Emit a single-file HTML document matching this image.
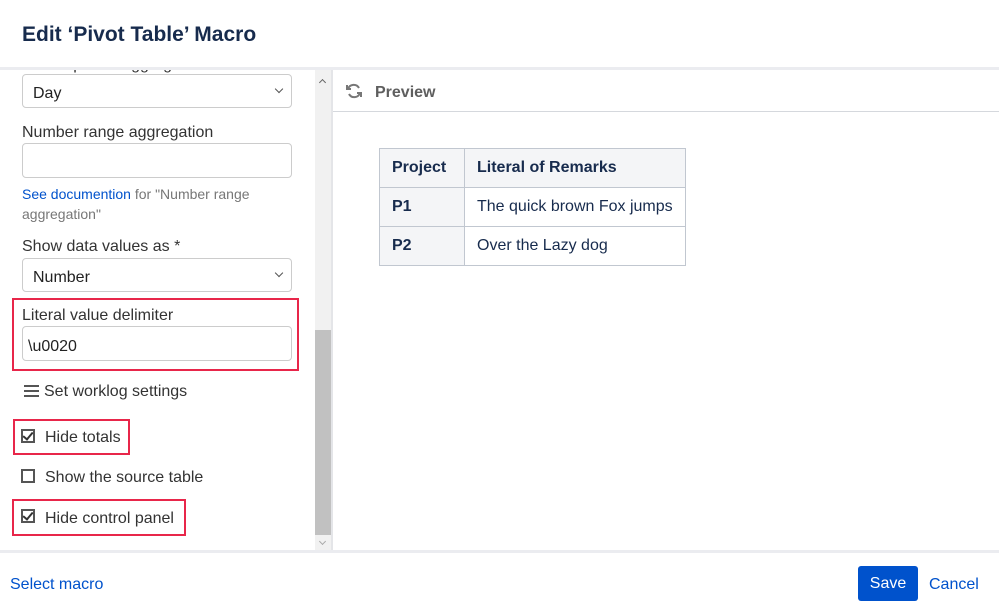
<!DOCTYPE html>
<html><head><meta charset="utf-8"><style>
*{box-sizing:border-box;margin:0;padding:0}
body{width:999px;height:610px;background:#fff;font-family:"Liberation Sans",sans-serif;color:#172b4d;position:relative;overflow:hidden}
.a{position:absolute}
.lbl{font-size:16px;color:#333}
.inp{border:1px solid #ccc;border-radius:4px;background:#fff}
.red{border:2px solid #e8264a}
.cb{width:14px;height:14px;border:2px solid #555;}
.chk::after{content:"";position:absolute;left:2px;top:-1px;width:4px;height:8px;border:solid #333;border-width:0 2px 2px 0;transform:rotate(40deg)}
.chev{width:7px;height:7px;border:solid #555;border-width:0 1.5px 1.5px 0;transform:rotate(45deg)}
td{border:1px solid #c1c7d0;font-size:16px;padding:0 12px;height:39px;white-space:nowrap}
</style></head><body>
<div class="a" style="left:22px;top:23px;font-size:21px;font-weight:bold;color:#172b4d">Edit ‘Pivot Table’ Macro</div>
<div class="a" style="left:0;top:67px;width:999px;height:3px;background:#ebecf0"></div>
<div class="a" style="left:0;top:70px;width:300px;height:5px;overflow:hidden"><div class="a" style="left:35px;top:-14px;font-size:16px;color:#333">Date period aggregation</div></div>
<div class="a inp" style="left:22px;top:74px;width:270px;height:34px"></div>
<div class="a" style="left:33px;top:85px;font-size:16px;color:#222">Day</div>
<div class="a chev" style="left:276px;top:86px;width:6px;height:6px"></div>
<div class="a lbl" style="left:22px;top:124px">Number range aggregation</div>
<div class="a inp" style="left:22px;top:143px;width:270px;height:35px"></div>
<div class="a" style="left:22px;top:184px;font-size:14px;color:#777;line-height:20px;width:260px"><span style="color:#0052cc">See documention</span> for "Number range aggregation"</div>
<div class="a lbl" style="left:22px;top:238px">Show data values as *</div>
<div class="a inp" style="left:22px;top:258px;width:270px;height:34px"></div>
<div class="a" style="left:33px;top:269px;font-size:16px;color:#222">Number</div>
<div class="a chev" style="left:276px;top:270px;width:6px;height:6px"></div>
<div class="a red" style="left:12px;top:298px;width:287px;height:73px"></div>
<div class="a lbl" style="left:22px;top:307px">Literal value delimiter</div>
<div class="a inp" style="left:22px;top:326px;width:270px;height:35px"></div>
<div class="a" style="left:28px;top:338px;font-size:16px;color:#222">\u0020</div>
<div class="a" style="left:24px;top:385px;width:15px;height:2px;background:#555;box-shadow:0 5px 0 #555,0 10px 0 #555"></div>
<div class="a lbl" style="left:44px;top:383px">Set worklog settings</div>
<div class="a red" style="left:13px;top:419px;width:117px;height:36px"></div>
<div class="a cb chk" style="left:21px;top:429px"></div>
<div class="a lbl" style="left:45px;top:429px">Hide totals</div>
<div class="a cb" style="left:21px;top:469px"></div>
<div class="a lbl" style="left:45px;top:469px">Show the source table</div>
<div class="a red" style="left:12px;top:499px;width:174px;height:37px"></div>
<div class="a cb chk" style="left:21px;top:509px"></div>
<div class="a lbl" style="left:45px;top:510px">Hide control panel</div>
<div class="a" style="left:315px;top:70px;width:16px;height:480px;background:#f1f1f1"></div>
<div class="a" style="left:315px;top:330px;width:16px;height:205px;background:#c1c1c1"></div>
<div class="a" style="left:320px;top:80px;width:5px;height:5px;border:solid #666;border-width:1.5px 0 0 1.5px;transform:rotate(45deg)"></div>
<div class="a" style="left:320px;top:539px;width:5px;height:5px;border:solid #aaa;border-width:0 1px 1px 0;transform:rotate(45deg)"></div>
<div class="a" style="left:331px;top:70px;width:2px;height:480px;background:#e4e5e8"></div>
<svg class="a" style="left:345px;top:82px" width="18" height="18" viewBox="0 0 18 18" fill="none" stroke="#777" stroke-width="2"><path d="M14 6A6 6 0 0 0 3 7"/><path d="M4 12A6 6 0 0 0 15 11"/><path d="M2 3v4h4" /><path d="M16 15v-4h-4"/></svg>
<div class="a" style="left:375px;top:84px;font-size:16px;font-weight:bold;color:#5e5e5e">Preview</div>
<div class="a" style="left:333px;top:111px;width:666px;height:1px;background:#d5d8dd"></div>
<table class="a" style="left:379px;top:148px;border-collapse:collapse;color:#172b4d">
<tr style="background:#f4f5f7"><td style="width:85px;font-weight:bold">Project</td><td style="width:220px;font-weight:bold">Literal of Remarks</td></tr>
<tr><td style="background:#f4f5f7;font-weight:bold">P1</td><td>The quick brown Fox jumps</td></tr>
<tr><td style="background:#f4f5f7;font-weight:bold">P2</td><td>Over the Lazy dog</td></tr>
</table>
<div class="a" style="left:0;top:550px;width:999px;height:3px;background:#ebecf0"></div>
<div class="a" style="left:10px;top:576px;font-size:16px;color:#0052cc">Select macro</div>
<div class="a" style="left:858px;top:566px;width:60px;height:35px;background:#0052cc;border-radius:3px;color:#fff;font-size:16px;text-align:center;line-height:36px">Save</div>
<div class="a" style="left:929px;top:576px;font-size:16px;color:#0052cc">Cancel</div>
</body></html>
